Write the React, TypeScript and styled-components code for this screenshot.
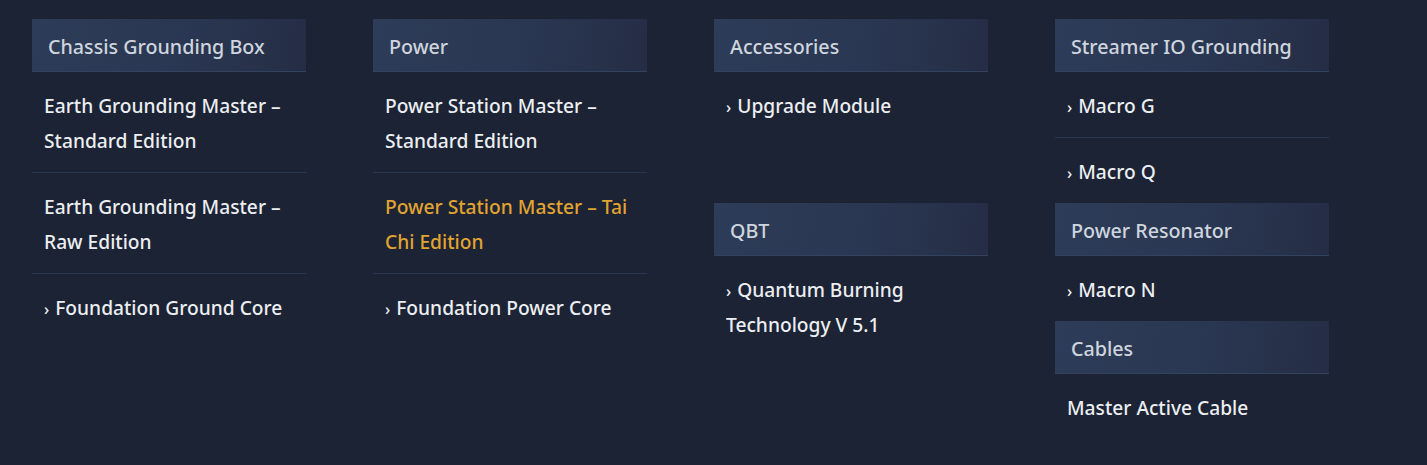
import React from 'react';
import styled, { createGlobalStyle } from 'styled-components';

interface MenuItem {
  label: string;
  arrow?: boolean;
  active?: boolean;
}

interface MenuGroup {
  title: string;
  items: MenuItem[];
}

const chassis: MenuGroup = {
  title: 'Chassis Grounding Box',
  items: [
    { label: 'Earth Grounding Master – Standard Edition' },
    { label: 'Earth Grounding Master – Raw Edition' },
    { label: 'Foundation Ground Core', arrow: true },
  ],
};

const power: MenuGroup = {
  title: 'Power',
  items: [
    { label: 'Power Station Master – Standard Edition' },
    { label: 'Power Station Master – Tai Chi Edition', active: true },
    { label: 'Foundation Power Core', arrow: true },
  ],
};

const accessories: MenuGroup = {
  title: 'Accessories',
  items: [{ label: 'Upgrade Module', arrow: true }],
};

const qbt: MenuGroup = {
  title: 'QBT',
  items: [{ label: 'Quantum Burning Technology V 5.1', arrow: true }],
};

const streamer: MenuGroup = {
  title: 'Streamer IO Grounding',
  items: [
    { label: 'Macro G', arrow: true },
    { label: 'Macro Q', arrow: true },
  ],
};

const resonator: MenuGroup = {
  title: 'Power Resonator',
  items: [{ label: 'Macro N', arrow: true }],
};

const cables: MenuGroup = {
  title: 'Cables',
  items: [{ label: 'Master Active Cable' }],
};

const Group: React.FC<{ group: MenuGroup }> = ({ group }) => (
  <GroupBox>
    <GroupTitle>{group.title}</GroupTitle>
    <ItemList>
      {group.items.map((item) => (
        <Item key={item.label} $active={item.active}>
          {item.arrow && <Arrow>›</Arrow>}
          {item.label}
        </Item>
      ))}
    </ItemList>
  </GroupBox>
);

const App: React.FC = () => (
  <>
    <GlobalStyle />
    <Menu>
      <Column $col={1} $row="1 / span 2">
        <Group group={chassis} />
      </Column>
      <Column $col={2} $row="1 / span 2">
        <Group group={power} />
      </Column>
      <Column $col={3} $row="1">
        <Group group={accessories} />
      </Column>
      <Column $col={4} $row="1">
        <Group group={streamer} />
      </Column>
      <Column $col={3} $row="2">
        <Group group={qbt} />
      </Column>
      <Column $col={4} $row="2">
        <Group group={resonator} />
        <Group group={cables} />
      </Column>
    </Menu>
  </>
);

export default App;

const GlobalStyle = createGlobalStyle`
  html, body {
    margin: 0;
    padding: 0;
    background: #1b2334;
  }
  body {
    font-family: "Noto Sans", "Open Sans", sans-serif;
    -webkit-font-smoothing: antialiased;
  }
`;

const Menu = styled.div`
  display: grid;
  grid-template-columns: repeat(4, 274px);
  grid-template-rows: auto auto;
  column-gap: 67px;
  align-items: start;
  padding: 19px 32px 30px;
  min-height: 465px;
  box-sizing: border-box;
`;

const Column = styled.div<{ $col: number; $row: string }>`
  grid-column: ${({ $col }) => $col};
  grid-row: ${({ $row }) => $row};
  display: flex;
  flex-direction: column;
`;

const GroupBox = styled.div`
  display: flex;
  flex-direction: column;
`;

const GroupTitle = styled.div`
  height: 53px;
  display: flex;
  align-items: center;
  padding: 2px 16px 0;
  box-sizing: border-box;
  background: linear-gradient(100deg, #2d3c58 0%, #2a3752 55%, #252d45 100%);
  border-bottom: 1px solid #33425f;
  color: #cfd5de;
  font-size: 19.7px;
  font-weight: 500;
`;

const ItemList = styled.ul`
  list-style: none;
  margin: 0;
  padding: 0;
`;

const Item = styled.li<{ $active?: boolean }>`
  padding: 15.5px 12px 14.5px;
  line-height: 35px;
  font-size: 19.2px;
  font-weight: 500;
  color: ${({ $active }) => ($active ? '#e2a330' : '#eceef1')};
  border-bottom: 1px solid #2a3753;

  &:last-child {
    border-bottom: none;
  }
`;

const Arrow = styled.span`
  font-size: 16px;
  line-height: 1;
  margin-right: 6px;
`;
